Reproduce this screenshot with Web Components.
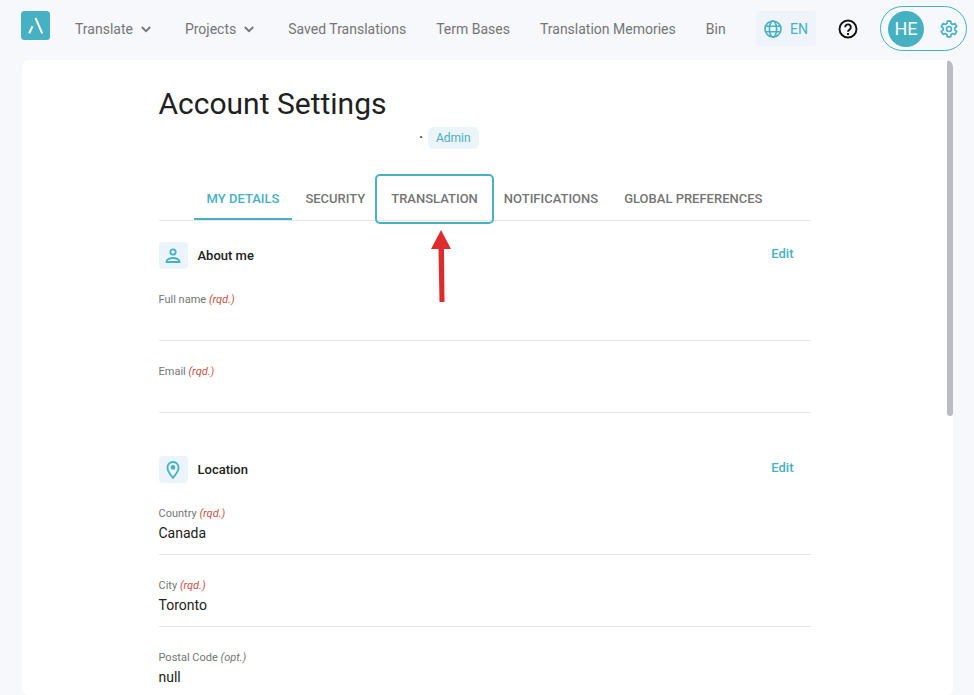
<!DOCTYPE html>
<html lang="en">
<head>
<meta charset="utf-8">
<meta name="viewport" content="width=device-width, initial-scale=1">
<title>Account Settings</title>
<style>
html {
  --teal: #45b1c3;
  --tint: #ebf4f8;
  --line: #e6e6e6;
  --grey: #757575;
  --ink: #212121;
}
body {
  margin: 0;
  height: 100vh;
  display: flex;
  flex-direction: column;
  background: #f6f8fc;
  color: var(--ink);
  font-family: Roboto, "Liberation Sans", sans-serif;
}
</style>
</head>
<body>

<top-bar>
  <nav-item menu>Translate</nav-item>
  <nav-item menu>Projects</nav-item>
  <nav-item>Saved Translations</nav-item>
  <nav-item>Term Bases</nav-item>
  <nav-item>Translation Memories</nav-item>
  <nav-item>Bin</nav-item>
  <language-button slot="tools">EN</language-button>
  <help-button slot="tools"></help-button>
  <account-pill slot="tools">HE</account-pill>
</top-bar>

<scroll-panel>
  <page-title>
    Account Settings
    <role-badge slot="role">Admin</role-badge>
  </page-title>
  <tab-bar>
    <tab-item selected>MY DETAILS</tab-item>
    <tab-item>SECURITY</tab-item>
    <tab-item marked>TRANSLATION</tab-item>
    <tab-item>NOTIFICATIONS</tab-item>
    <tab-item>GLOBAL PREFERENCES</tab-item>
  </tab-bar>
  <detail-section icon="person" heading="About me">
    <detail-field label="Full name" required></detail-field>
    <detail-field label="Email" required></detail-field>
  </detail-section>
  <detail-section icon="pin" heading="Location">
    <detail-field label="Country" required>Canada</detail-field>
    <detail-field label="City" required>Toronto</detail-field>
    <detail-field label="Postal Code">null</detail-field>
  </detail-section>
</scroll-panel>

<script>
'use strict';

(function() {

const icons = {
  person: `<svg width="18" height="18" viewBox="0 0 18 18" fill="none" stroke="currentColor" stroke-width="1.8">
    <circle cx="9" cy="5" r="2.7"/>
    <path d="M2.6 15v-.8c0-2 3.600-3.200 6.400-3.200s6.400 1.200 6.400 3.200v.8z"/>
  </svg>`,
  pin: `<svg width="18" height="20" viewBox="0 0 18 20" fill="none" stroke="currentColor" stroke-width="1.8">
    <path d="M9 17.900C6 14.400 3.400 11.200 3.400 7.600a5.600 5.600 0 0 1 11.200 0C14.600 11.200 12 14.400 9 17.900z"/>
    <circle cx="9" cy="7.400" r="2.300" fill="currentColor" stroke="none"/>
  </svg>`,
};

class TopBarElement extends HTMLElement {
  constructor() {
    super();
    this.attachShadow({mode: 'open'}).innerHTML = `
<style>
:host {
  display: block;
  flex: none;
}
header {
  display: flex;
  align-items: center;
  padding: 6px 7px 9px 21px;
}
.logo {
  display: block;
  height: 29px;
  margin: 0 25px 6px 0;
}
nav {
  display: flex;
  gap: 30px;
}
.tools {
  display: flex;
  align-items: center;
  gap: 22px;
  margin-left: auto;
}
</style>
<header>
  <a class="logo" href="#" aria-label="Home">
    <svg width="29" height="29" viewBox="0 0 29 29">
      <rect width="29" height="29" rx="3.500" fill="#45b1c3"/>
      <path d="M14.500 7 21.200 22.300M11.600 15.200 8.200 22.300" fill="none" stroke="#fff" stroke-width="2"/>
    </svg>
  </a>
  <nav><slot></slot></nav>
  <div class="tools"><slot name="tools"></slot></div>
</header>
    `;
  }
}

class NavItemElement extends HTMLElement {
  constructor() {
    super();
    const menu = this.hasAttribute('menu');
    this.attachShadow({mode: 'open'}).innerHTML = `
<style>
:host {
  display: block;
}
a {
  display: flex;
  align-items: center;
  gap: 4px;
  color: var(--grey);
  font-size: 14px;
  line-height: 20px;
  text-decoration: none;
  white-space: nowrap;
}
</style>
<a href="#"><slot></slot>${menu ? `
  <svg width="18" height="18" viewBox="0 0 18 18" fill="none" stroke="currentColor" stroke-width="1.8">
    <path d="M4.800 7 9 11.200 13.200 7"/>
  </svg>` : ''}</a>
    `;
  }
}

class LanguageButtonElement extends HTMLElement {
  constructor() {
    super();
    this.attachShadow({mode: 'open'}).innerHTML = `
<style>
:host {
  display: block;
}
button {
  display: flex;
  align-items: center;
  gap: 8px;
  height: 35px;
  padding: 0 8px;
  border: 0;
  border-radius: 4px;
  background: #eef4f9;
  color: var(--teal);
  font: 14px/20px Roboto, sans-serif;
}
</style>
<button>
  <svg width="18" height="18" viewBox="0 0 18 18" fill="none" stroke="currentColor" stroke-width="1.6">
    <circle cx="9" cy="9" r="8"/>
    <ellipse cx="9" cy="9" rx="3.600" ry="8"/>
    <path d="M1.600 6.200h14.800M1.600 11.800h14.800"/>
  </svg>
  <slot></slot>
</button>
    `;
  }
}

class HelpButtonElement extends HTMLElement {
  constructor() {
    super();
    this.attachShadow({mode: 'open'}).innerHTML = `
<style>
:host {
  display: block;
}
button {
  display: block;
  padding: 0;
  border: 0;
  background: none;
  color: #111;
}
svg {
  display: block;
}
</style>
<button aria-label="Help">
  <svg width="20" height="20" viewBox="0 0 20 20" fill="none" stroke="currentColor" stroke-width="1.9">
    <circle cx="10" cy="10" r="8.500"/>
    <path d="M7.200 8.200a2.800 2.800 0 1 1 4.500 2.200c-1 .8-1.700 1.200-1.700 2.300"/>
    <path d="M10 13.900v2"/>
  </svg>
</button>
    `;
  }
}

class AccountPillElement extends HTMLElement {
  constructor() {
    super();
    this.attachShadow({mode: 'open'}).innerHTML = `
<style>
:host {
  display: block;
}
button {
  display: flex;
  align-items: center;
  gap: 15px;
  height: 45px;
  padding: 0 7px;
  border: 1px solid var(--teal);
  border-radius: 23px;
  background: none;
  color: var(--teal);
  font: 18px/20px Roboto, sans-serif;
}
.avatar {
  width: 36px;
  line-height: 36px;
  border-radius: 50%;
  background: var(--teal);
  color: #fff;
}
</style>
<button aria-label="Account">
  <span class="avatar"><slot></slot></span>
  <svg width="20" height="20" viewBox="0 0 24 24" fill="none" stroke="currentColor" stroke-width="2" stroke-linejoin="round">
    <path d="M10 2.500h4l.5 2.900 1.900 1.100 2.800-1 2 3.500-2.300 1.900v2.200l2.300 1.900-2 3.500-2.800-1-1.900 1.100-.5 2.900h-4l-.5-2.900-1.900-1.100-2.800 1-2-3.500 2.300-1.900v-2.200L2.800 9l2-3.500 2.800 1 1.900-1.100z"/>
    <circle cx="12" cy="12" r="3"/>
  </svg>
</button>
    `;
  }
}

class ScrollPanelElement extends HTMLElement {
  constructor() {
    super();
    this.attachShadow({mode: 'open'}).innerHTML = `
<style>
:host {
  display: block;
  position: relative;
  flex: 1;
  min-height: 0;
  margin: 0 21px 0 22px;
  border-radius: 7px;
  background: #fff;
  overflow: hidden;
}
.view {
  box-sizing: border-box;
  height: 100%;
  padding-right: 6px;
  overflow: hidden;
}
main {
  max-width: 652px;
  margin: 0 auto;
  padding-top: 24px;
}
/* thumb lies over the right edge of the panel */
.thumb {
  position: absolute;
  top: 0;
  right: 0;
  width: 6px;
  height: 56%;
  border-radius: 3px;
  background: #b9bdc3;
}
</style>
<div class="view"><main><slot></slot></main></div>
<div class="thumb"></div>
    `;
  }
}

class PageTitleElement extends HTMLElement {
  constructor() {
    super();
    this.attachShadow({mode: 'open'}).innerHTML = `
<style>
:host {
  display: block;
}
h1 {
  margin: 0;
  font-size: 30px;
  font-weight: 400;
  line-height: 40px;
}
.role {
  display: flex;
  padding: 3px 0 0 40%;
}
</style>
<h1><slot></slot></h1>
<div class="role"><slot name="role"></slot></div>
    `;
  }
}

class RoleBadgeElement extends HTMLElement {
  constructor() {
    super();
    this.attachShadow({mode: 'open'}).innerHTML = `
<style>
:host {
  display: flex;
  align-items: center;
  gap: 5px;
  font-size: 12px;
  line-height: 22px;
}
.dot {
  font-weight: 700;
}
.badge {
  padding: 0 8px;
  border-radius: 6px;
  background: var(--tint);
  color: var(--teal);
}
</style>
<span class="dot">·</span>
<span class="badge"><slot></slot></span>
    `;
  }
}

class TabBarElement extends HTMLElement {
  constructor() {
    super();
    this.attachShadow({mode: 'open'}).innerHTML = `
<style>
:host {
  display: flex;
  justify-content: center;
  margin-top: 28px;
  border-bottom: 1px solid var(--line);
}
</style>
<slot></slot>
    `;
    this.setAttribute('role', 'tablist');
  }
}

class TabItemElement extends HTMLElement {
  constructor() {
    super();
    const marked = this.hasAttribute('marked');
    const selected = this.hasAttribute('selected');
    this.attachShadow({mode: 'open'}).innerHTML = `
<style>
:host {
  display: block;
  position: relative;
}
button {
  display: block;
  height: 43px;
  padding: 2px 13px 0;
  border: 0;
  border-bottom: 2px solid transparent;
  background: none;
  color: var(--grey);
  font: 500 13px/20px Roboto, sans-serif;
  white-space: nowrap;
}
:host([selected]) button {
  border-color: var(--teal);
  color: var(--teal);
}
/* callout frame and arrow drawn over the tab */
.frame {
  position: absolute;
  inset: -3px -3px -4px;
  border: 2px solid var(--teal);
  border-radius: 5px;
  pointer-events: none;
}
.arrow {
  position: absolute;
  left: 47%;
  top: 100%;
  margin-top: 10px;
  z-index: 1;
  pointer-events: none;
}
</style>
<button role="tab" aria-selected="${selected}"><slot></slot></button>
${marked ? `<div class="frame"></div>
<svg class="arrow" width="20" height="72" viewBox="0 0 20 72" fill="#dc2c2e">
  <path d="M10 0l10 19h-7l.5 53h-5L7.500 19H0z"/>
</svg>` : ''}
    `;
  }
}

class DetailSectionElement extends HTMLElement {
  constructor() {
    super();
    this.attachShadow({mode: 'open'}).innerHTML = `
<style>
:host {
  display: block;
  padding: 21px 0 22px;
}
header {
  display: flex;
  align-items: center;
  height: 27px;
}
.icon {
  display: flex;
  align-items: center;
  justify-content: center;
  width: 29px;
  height: 27px;
  margin-right: 10px;
  border-radius: 4px;
  background: var(--tint);
  color: var(--teal);
}
h2 {
  margin: 0;
  font-size: 13px;
  font-weight: 500;
  line-height: 20px;
}
button {
  margin-left: auto;
  padding: 0 17px 4px;
  border: 0;
  background: none;
  color: var(--teal);
  font: 500 13px/20px Roboto, sans-serif;
}
</style>
<header>
  <span class="icon">${icons[this.getAttribute('icon')]}</span>
  <h2>${this.getAttribute('heading')}</h2>
  <button>Edit</button>
</header>
<slot></slot>
    `;
  }
}

class DetailFieldElement extends HTMLElement {
  constructor() {
    super();
    const required = this.hasAttribute('required');
    this.attachShadow({mode: 'open'}).innerHTML = `
<style>
:host {
  display: block;
  padding: 23px 0 9px;
  border-bottom: 1px solid var(--line);
}
dl, dd {
  margin: 0;
}
dt {
  color: var(--grey);
  font-size: 11px;
  line-height: 16px;
}
:host([required]) em {
  color: #c9503f;
}
dd {
  min-height: 23px;
  font-size: 14px;
  line-height: 23px;
}
</style>
<dl>
  <dt>${this.getAttribute('label')} <em>${required ? '(rqd.)' : '(opt.)'}</em></dt>
  <dd><slot></slot></dd>
</dl>
    `;
  }
}

customElements.define('nav-item', NavItemElement);
customElements.define('language-button', LanguageButtonElement);
customElements.define('help-button', HelpButtonElement);
customElements.define('account-pill', AccountPillElement);
customElements.define('top-bar', TopBarElement);
customElements.define('role-badge', RoleBadgeElement);
customElements.define('page-title', PageTitleElement);
customElements.define('tab-item', TabItemElement);
customElements.define('tab-bar', TabBarElement);
customElements.define('detail-field', DetailFieldElement);
customElements.define('detail-section', DetailSectionElement);
customElements.define('scroll-panel', ScrollPanelElement);

}());
</script>
</body>
</html>
